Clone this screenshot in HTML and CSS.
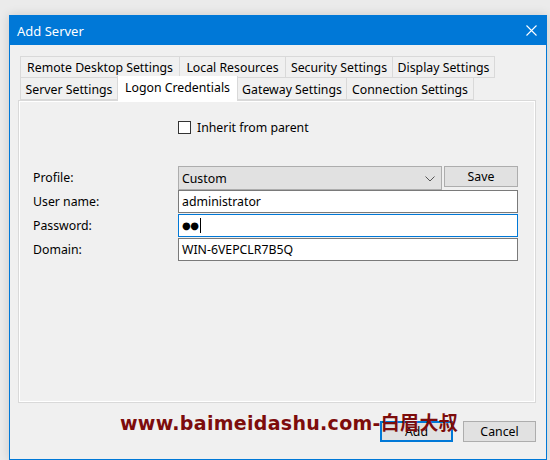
FILE: index.html
```html
<!DOCTYPE html>
<html>
<head>
<meta charset="utf-8">
<link rel="stylesheet" href="styles.css">
</head>
<body>
<div class="window">
  <div class="titlebar">
    <span class="title">Add Server</span>
    <svg class="close" width="11" height="11" viewBox="0 0 11 11"><path d="M0.5 0.5 L10.5 10.5 M10.5 0.5 L0.5 10.5" stroke="#fff" stroke-width="1.1" fill="none"/></svg>
  </div>
  <div class="body">
    <div class="tabs">
      <div class="tabrow">
        <div class="tab w1">Remote Desktop Settings</div>
        <div class="tab w2">Local Resources</div>
        <div class="tab w3">Security Settings</div>
        <div class="tab w4">Display Settings</div>
      </div>
      <div class="tabrow">
        <div class="tab w5">Server Settings</div>
        <div class="tab w6 active">Logon Credentials</div>
        <div class="tab w7">Gateway Settings</div>
        <div class="tab w8">Connection Settings</div>
      </div>
    </div>
    <div class="panel">
      <div class="inherit">
        <span class="checkbox"></span>
        <span class="inherit-label">Inherit from parent</span>
      </div>
      <div class="form">
        <div class="row">
          <span class="label">Profile:</span>
          <div class="combo">
            <span>Custom</span>
            <svg class="chev" width="10" height="6" viewBox="0 0 10 6"><path d="M0.5 0.5 L5 5 L9.5 0.5" stroke="#555" stroke-width="1" fill="none"/></svg>
          </div>
          <div class="btn save">Save</div>
        </div>
        <div class="row">
          <span class="label">User name:</span>
          <div class="input">administrator</div>
        </div>
        <div class="row">
          <span class="label">Password:</span>
          <div class="input focused"><span class="dots">●●</span><span class="caret"></span></div>
        </div>
        <div class="row">
          <span class="label">Domain:</span>
          <div class="input">WIN-6VEPCLR7B5Q</div>
        </div>
      </div>
    </div>
    <div class="buttons">
      <div class="btn dlg default">Add</div>
      <div class="btn dlg">Cancel</div>
    </div>
    <div class="watermark">www.baimeidashu.com-白眉大叔</div>
  </div>
</div>
</body>
</html>
```
FILE: styles.css
```css
html, body {
  margin: 0;
  padding: 0;
}
body {
  width: 550px;
  height: 460px;
  background: #ebebeb;
  font-family: "Noto Sans", "Liberation Sans", sans-serif;
  font-size: 12.3px;
  color: #000;
  overflow: hidden;
}
.window {
  position: relative;
  margin: 15px 0 0 9px;
  width: 538px;
  height: 445px;
  box-sizing: border-box;
  border: 1px solid #0078d7;
  border-top: none;
  background: #f0f0f0;
  box-shadow: 0 0 10px rgba(0,0,0,0.14);
}
.titlebar {
  height: 30px;
  background: #0078d7;
  display: flex;
  align-items: center;
  justify-content: space-between;
  padding: 0 10px 0 8px;
  margin: 0 -1px;
}
.title {
  color: #fff;
  font-size: 13px;
  margin-top: 1px;
}
.close {
  display: block;
}
.body {
  padding: 11px 10px 0 8px;
}
.tabs {
  padding-left: 2px;
  position: relative;
  z-index: 2;
}
.tabrow {
  display: flex;
  height: 22px;
}
.tab {
  box-sizing: border-box;
  height: 22px;
  border: 1px solid #d9d9d9;
  margin-left: -1px;
  background: #f0f0f0;
  display: flex;
  align-items: center;
  justify-content: center;
  white-space: nowrap;
  padding-top: 1px;
}
.tabrow:first-child .tab:first-child,
.tabrow:last-child .tab:first-child {
  margin-left: 0;
}
.tabrow:last-child .tab {
  border-top: none;
}
.w1 { width: 160px; }
.w2 { width: 107px; }
.w3 { width: 108px; }
.w4 { width: 103px; }
.w5 { width: 98px; }
.w6 { width: 121px; }
.w7 { width: 110px; }
.w8 { width: 128px; }
.tab.active {
  background: #fff;
  height: 25px;
  margin-top: -2px;
  border-top: 1px solid #d9d9d9;
  border-bottom: none;
  padding-top: 0;
  padding-bottom: 3px;
  position: relative;
  z-index: 3;
}
.panel {
  box-sizing: border-box;
  height: 303px;
  border: 1px solid #d9d9d9;
  box-shadow: inset 0 0 0 1px #fff;
}
.inherit {
  display: flex;
  align-items: center;
  padding: 20px 0 0 159px;
  height: 13px;
}
.checkbox {
  box-sizing: border-box;
  width: 13px;
  height: 13px;
  border: 1px solid #333;
  background: #fff;
  margin-right: 6px;
}
.form {
  padding: 32px 0 0 14px;
  display: flex;
  flex-direction: column;
  gap: 1px;
}
.row {
  display: flex;
  align-items: center;
}
.label {
  width: 145px;
}
.combo {
  box-sizing: border-box;
  width: 264px;
  height: 24px;
  background: #e1e1e1;
  border: 1px solid #adadad;
  display: flex;
  align-items: center;
  justify-content: space-between;
  padding: 1px 6px 0 3px;
  margin-bottom: -1px;
}
.chev {
  display: block;
}
.btn {
  box-sizing: border-box;
  background: #e1e1e1;
  border: 1px solid #adadad;
  display: flex;
  align-items: center;
  justify-content: center;
}
.save {
  width: 74px;
  height: 21px;
  margin-left: 2px;
  align-self: flex-start;
}
.input {
  box-sizing: border-box;
  width: 340px;
  height: 23px;
  background: #fff;
  border: 1px solid #7a7a7a;
  display: flex;
  align-items: center;
  padding: 0 3px;
}
.input.focused {
  border-color: #0078d7;
}
.dots {
  font-family: "DejaVu Sans", sans-serif;
  font-size: 10px;
  letter-spacing: -0.5px;
}
.caret {
  width: 1px;
  height: 15px;
  background: #000;
  margin-left: 2px;
}
.buttons {
  display: flex;
  justify-content: flex-end;
  gap: 10px;
  padding-top: 18px;
}
.dlg {
  width: 73px;
  height: 21px;
}
.dlg.default {
  border: 2px solid #0078d7;
}
.watermark {
  position: absolute;
  left: 110px;
  top: 393px;
  color: #7d0c0c;
  font-family: "DejaVu Sans", "Noto Sans CJK SC", sans-serif;
  font-weight: bold;
  font-size: 19px;
  white-space: nowrap;
  letter-spacing: 0.3px;
}
```
